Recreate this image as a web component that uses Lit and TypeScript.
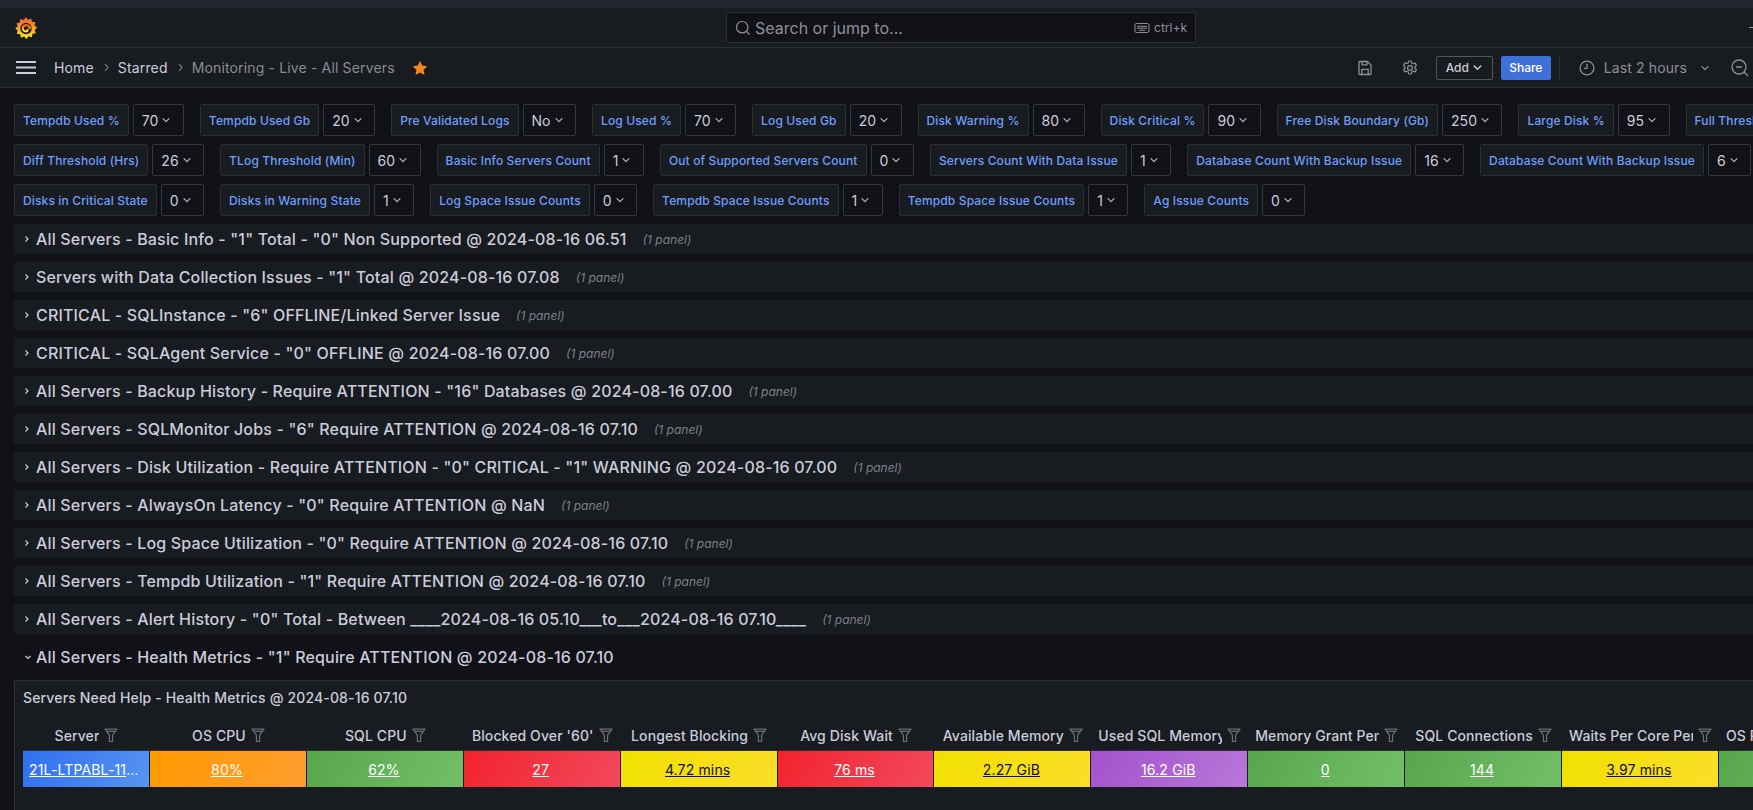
import { LitElement, html, css, svg } from "lit";
import { customElement } from "lit/decorators.js";

const chev = (s = 10) => html`<svg class="chev" width=${s} height=${s} viewBox="0 0 10 10"><path d="M2 3.600 5 6.600 8 3.600" fill="none" stroke="currentColor" stroke-width="1.300" stroke-linecap="round" stroke-linejoin="round"/></svg>`;
const selChev = html`<svg width="16" height="16" viewBox="0 0 16 16"><path d="M5 6.700 8 9.700 11 6.700" fill="none" stroke="#b4b5c2" stroke-width="1.200" stroke-linecap="round" stroke-linejoin="round"/></svg>`;
const crumbSep = html`<svg width="5" height="9" viewBox="0 0 5 9"><path d="M1 1 4 4.500 1 8" fill="none" stroke="currentColor" stroke-width="1.100"/></svg>`;
const filterIcon = html`<svg class="filter" width="14" height="15" viewBox="0 0 14 15"><path d="M1 1.200H13L8.600 7.200V13.400H5.400V7.200Z M2.600 3.400H11.400" fill="none" stroke="#6c6e75" stroke-width="1.200" stroke-linejoin="round"/></svg>`;

const varRows: [string, string][][] = [
  [["Tempdb Used %","70"],["Tempdb Used Gb","20"],["Pre Validated Logs","No"],["Log Used %","70"],["Log Used Gb","20"],["Disk Warning %","80"],["Disk Critical %","90"],["Free Disk Boundary (Gb)","250"],["Large Disk %","95"],["Full Threshold (Hrs)","26"]],
  [["Diff Threshold (Hrs)","26"],["TLog Threshold (Min)","60"],["Basic Info Servers Count","1"],["Out of Supported Servers Count","0"],["Servers Count With Data Issue","1"],["Database Count With Backup Issue","16"],["Database Count With Backup Issue","6"]],
  [["Disks in Critical State","0"],["Disks in Warning State","1"],["Log Space Issue Counts","0"],["Tempdb Space Issue Counts","1"],["Tempdb Space Issue Counts","1"],["Ag Issue Counts","0"]],
];

const rows = [
  `All Servers - Basic Info - "1" Total - "0" Non Supported @ 2024-08-16 06.51`,
  `Servers with Data Collection Issues - "1" Total @ 2024-08-16 07.08`,
  `CRITICAL - SQLInstance - "6" OFFLINE/Linked Server Issue`,
  `CRITICAL - SQLAgent Service - "0" OFFLINE @ 2024-08-16 07.00`,
  `All Servers - Backup History - Require ATTENTION - "16" Databases @ 2024-08-16 07.00`,
  `All Servers - SQLMonitor Jobs - "6" Require ATTENTION @ 2024-08-16 07.10`,
  `All Servers - Disk Utilization - Require ATTENTION - "0" CRITICAL - "1" WARNING @ 2024-08-16 07.00`,
  `All Servers - AlwaysOn Latency - "0" Require ATTENTION @ NaN`,
  `All Servers - Log Space Utilization - "0" Require ATTENTION @ 2024-08-16 07.10`,
  `All Servers - Tempdb Utilization - "1" Require ATTENTION @ 2024-08-16 07.10`,
  `All Servers - Alert History - "0" Total - Between ____2024-08-16 05.10___to___2024-08-16 07.10____`,
];

const cols: [string, string, string][] = [
  ["Server","21L-LTPABL-1187-SQLDB","blue"],["OS CPU","80%","orange"],["SQL CPU","62%","green"],["Blocked Over '60'","27","red"],
  ["Longest Blocking","4.72 mins","yellow"],["Avg Disk Wait","76 ms","red"],["Available Memory","2.27 GiB","yellow"],
  ["Used SQL Memory","16.2 GiB","purple"],["Memory Grant Pending","0","green"],["SQL Connections","144","green"],
  ["Waits Per Core Per Minute","3.97 mins","yellow"],["OS Page File Usage Percent","","green"],
];

const logo = svg`<svg width="22" height="24" viewBox="0 0 24 25">
  <defs><linearGradient id="lg" x1="0" y1="1" x2="0" y2="0"><stop offset="0" stop-color="#fcee1f"/><stop offset="1" stop-color="#f05a28"/></linearGradient></defs>
  <path fill="url(#lg)" d="M12 .6l2.300 3 3.500-1.500.7 3.700 3.900.5-1.100 3.500 2.900 2.300-2.700 2.500 1.300 3.600-3.700.6-.7 3.800-3.500-1.100-2.400 3-2.600-2.700-3.500 1.300-.7-3.700-3.800-.5 1.100-3.600L.3 13.300l2.500-2.600-1.200-3.500 3.700-.7.400-3.800 3.600 1z"/>
  <circle cx="12" cy="13" r="6.200" fill="#181b1f"/>
  <path d="M16.300 12.500a4.300 4.300 0 0 0-4.400-3.100 3.600 3.600 0 0 0-3.400 3.700 3.200 3.200 0 0 0 3.300 3.100 2.100 2.100 0 0 0 2-2.100" fill="none" stroke="url(#lg)" stroke-width="2.300" stroke-linecap="round"/>
</svg>`;

@customElement("app-root")
export class AppRoot extends LitElement {
  static styles = css`
    :host { display: block; width: 100%; height: 100vh; overflow: hidden; background: #111217; color: #ccccdc; font-family: Inter, "Noto Sans", sans-serif; font-size: 14px; }
    svg { display: block; flex: none; }
    .strip { height: 8px; background: #22252b; }
    .topnav { height: 39px; background: #181b1f; border-bottom: 1px solid #2c2f35; display: flex; align-items: center; padding-left: 15px; }
    .searchwrap { flex: 1; display: flex; padding-left: 689px; }
    .search { width: 470px; height: 31px; box-sizing: border-box; background: #111217; border: 1px solid #2c2f35; border-radius: 2px; display: flex; align-items: center; padding: 0 8px; color: #8e9097; gap: 4px; }
    .search .ph { flex: 1; font-size: 16px; }
    .kbd { font-size: 12px; display: flex; align-items: center; gap: 4px; }
    .edge { width: 4px; height: 1px; background: #9a9ba1; }
    .subnav { height: 39px; background: #181b1f; border-bottom: 1px solid #2c2f35; display: flex; align-items: center; padding-left: 16px; }
    .crumb { font-size: 14px; color: #ccccdc; letter-spacing: .15px; }
    .crumb.dim { color: #8a8c92; }
    .sep { color: #8a8c92; margin: 0 9px 0 10px; }
    .burger { margin-right: 18px; }
    .star { margin-left: 17px; }
    .actions { margin-left: auto; display: flex; align-items: center; color: #8e9097; margin-right: 3px; }
    .btn { box-sizing: border-box; height: 24px; border-radius: 2px; font-size: 12px; font-weight: 500; display: flex; align-items: center; justify-content: center; }
    .add { width: 57px; border: 1px solid #54565c; color: #ccccdc; gap: 3px; margin-left: 18px; }
    .share { width: 50px; background: #3d71d9; color: #fff; margin-left: 8px; }
    .divider { width: 1px; height: 24px; background: #2c2f35; margin: 0 19px 0 8px; }
    .gear { margin-left: 29px; }
    .last { margin: 0 13px 0 9px; color: #8e9097; letter-spacing: .12px; }
    .zoomout { margin-left: 20px; }
    .vars { padding: 16px 0 0 14px; display: flex; flex-direction: column; gap: 8px; }
    .varrow { display: flex; gap: 16px; }
    .var { display: flex; gap: 4px; flex: none; }
    .vlabel { height: 32px; box-sizing: border-box; display: flex; align-items: center; padding: 0 8px; font-size: 12px; font-weight: 500; letter-spacing: .14px; color: #6e9fff; background: #181b1f; border: 1px solid #2c2f35; border-radius: 2px; white-space: nowrap; }
    .vval { height: 32px; box-sizing: border-box; display: flex; align-items: center; padding: 0 8.5px 0 8px; font-size: 14px; color: #ccccdc; background: #111217; border: 1px solid #34363c; border-radius: 2px; }
    .rows { padding: 8px 0 0 14px; display: flex; flex-direction: column; gap: 8px; }
    .row { height: 30px; background: #181b1f; display: flex; align-items: center; padding-left: 10px; white-space: nowrap; }
    .row.open { background: none; padding-left: 9px; }
    .tt { font-size: 16px; font-weight: 500; letter-spacing: .165px; color: #ccccdc; margin-left: 6px; }
    .open .tt { margin-left: 3px; }
    .cnt { font-size: 12px; font-style: italic; color: #7e8088; margin-left: 16px; }
    .row svg { color: #ccccdc; }
    .panel { margin: 8px 0 0 14px; background: #181b1f; border: 1px solid #2c2f35; border-right: none; height: 200px; padding-left: 8px; }
    .ptitle { height: 32px; display: flex; align-items: center; font-size: 14px; font-weight: 500; letter-spacing: .15px; color: #ccccdc; }
    .grid { display: grid; grid-template-columns: 126px repeat(11, 155.9px); column-gap: 1px; width: 1900px; margin-top: 2px; }
    .hd { height: 36px; box-sizing: border-box; display: flex; align-items: center; justify-content: center; gap: 5px; padding: 6px 6px 0 7px; font-weight: 500; letter-spacing: .1px; color: #ccccdc; border-bottom: 1px solid #2c2f35; min-width: 0; }
    .hd span { overflow: hidden; white-space: nowrap; min-width: 0; }
    .cell { height: 36px; display: flex; align-items: center; justify-content: center; padding: 0 8px 0 6px; min-width: 0; color: #fff; font-size: 14px; letter-spacing: .15px; }
    .cell a { text-decoration: underline; overflow: hidden; white-space: nowrap; text-overflow: ellipsis; color: inherit; }
    .blue { background: linear-gradient(120deg, #2f6ff0, #5794f2); }
    .orange { background: linear-gradient(120deg, #ff9900, #ff9d30); }
    .green { background: linear-gradient(120deg, #56a64b, #73bf69); }
    .red { background: linear-gradient(120deg, #f2222e, #f2495c); }
    .yellow { background: linear-gradient(120deg, #f2e000, #fade2a); color: #111217; }
    .purple { background: linear-gradient(120deg, #a352cc, #b877d9); }
  `;

  render() {
    return html`
      <div class="strip"></div>
      <div class="topnav">
        ${logo}
        <div class="searchwrap">
          <div class="search">
            <svg width="16" height="16" viewBox="0 0 16 16"><circle cx="7.200" cy="7.200" r="5.700" fill="none" stroke="currentColor" stroke-width="1.200"/><path d="M11.400 11.400 14.500 14.500" stroke="currentColor" stroke-width="1.200"/></svg>
            <span class="ph">Search or jump to...</span>
            <span class="kbd"><svg width="16" height="12" viewBox="0 0 16 12"><rect x="1" y="1.500" width="14" height="9" rx="1.500" fill="none" stroke="currentColor"/><path d="M3 4.300h10M3 6.200h10M5 8.300h6" stroke="currentColor"/></svg>ctrl+k</span>
          </div>
        </div>
        <div class="edge"></div>
      </div>
      <div class="subnav">
        <svg class="burger" width="20" height="13" viewBox="0 0 20 13"><path d="M0 1h20M0 6.500h20M0 12h20" stroke="#ccccdc" stroke-width="1.800"/></svg>
        <span class="crumb">Home</span>
        <span class="sep">${crumbSep}</span>
        <span class="crumb">Starred</span>
        <span class="sep">${crumbSep}</span>
        <span class="crumb dim">Monitoring - Live - All Servers</span>
        <svg class="star" width="16" height="16" viewBox="0 0 16 16"><path d="M8 .8l2.200 4.700 5.100.7-3.700 3.600.9 5.100L8 12.500l-4.500 2.400.9-5.100L.7 6.200l5.100-.7z" fill="#f5851f"/></svg>
        <div class="actions">
          <svg width="16" height="16" viewBox="0 0 16 16" fill="none" stroke="currentColor" stroke-width="1.300" stroke-linejoin="round"><path d="M2 2.500a1 1 0 0 1 1-1h7.500L14 5v8.500a1 1 0 0 1-1 1H3a1 1 0 0 1-1-1z"/><path d="M5 1.500v3.300h5V1.500M4.800 14.500V9.300h6.400v5.200"/></svg>
          <svg class="gear" width="16" height="16" viewBox="0 0 16 16" fill="none" stroke="currentColor" stroke-width="1.200" stroke-linejoin="round"><path d="M6.700 1h2.600l.4 2 1.500.8 1.900-.7 1.300 2.300-1.500 1.300v1.600l1.500 1.300-1.300 2.300-1.900-.7-1.500.8-.4 2H6.700l-.4-2-1.500-.8-1.900.7-1.300-2.300 1.500-1.300V7.400L1.600 5.100l1.300-2.300 1.900.7 1.500-.8z"/><circle cx="8" cy="8" r="2.400"/></svg>
          <div class="btn add">Add ${chev(11)}</div>
          <div class="btn share">Share</div>
          <div class="divider"></div>
          <svg width="16" height="16" viewBox="0 0 16 16" fill="none" stroke="currentColor" stroke-width="1.300"><circle cx="8" cy="8" r="6.900"/><path d="M8 3.800V8.400H5"/></svg>
          <span class="last">Last 2 hours</span>
          ${chev(10)}
          <svg class="zoomout" width="20" height="20" viewBox="0 0 20 20" fill="none" stroke="currentColor" stroke-width="1.300"><circle cx="9" cy="9" r="7"/><path d="M6 9h6M14 14 18 18"/></svg>
        </div>
      </div>
      <div class="vars">
        ${varRows.map(r => html`<div class="varrow">${r.map(([l, v]) => html`<div class="var"><div class="vlabel">${l}</div><div class="vval">${v}${selChev}</div></div>`)}</div>`)}
      </div>
      <div class="rows">
        ${rows.map(t => html`<div class="row"><svg width="6" height="10" viewBox="0 0 6 10"><path d="M1.500 2.500 4 5 1.500 7.500" fill="none" stroke="currentColor" stroke-width="1.200"/></svg><span class="tt">${t}</span><span class="cnt">(1 panel)</span></div>`)}
        <div class="row open"><svg width="10" height="10" viewBox="0 0 10 10"><path d="M2.500 4 5 6.500 7.500 4" fill="none" stroke="currentColor" stroke-width="1.200"/></svg><span class="tt">All Servers - Health Metrics - "1" Require ATTENTION @ 2024-08-16 07.10</span></div>
      </div>
      <div class="panel">
        <div class="ptitle">Servers Need Help - Health Metrics @ 2024-08-16 07.10</div>
        <div class="grid">
          ${cols.map(c => html`<div class="hd"><span>${c[0]}</span>${filterIcon}</div>`)}
          ${cols.map(c => html`<div class="cell ${c[2]}"><a>${c[1]}</a></div>`)}
        </div>
      </div>
    `;
  }
}
